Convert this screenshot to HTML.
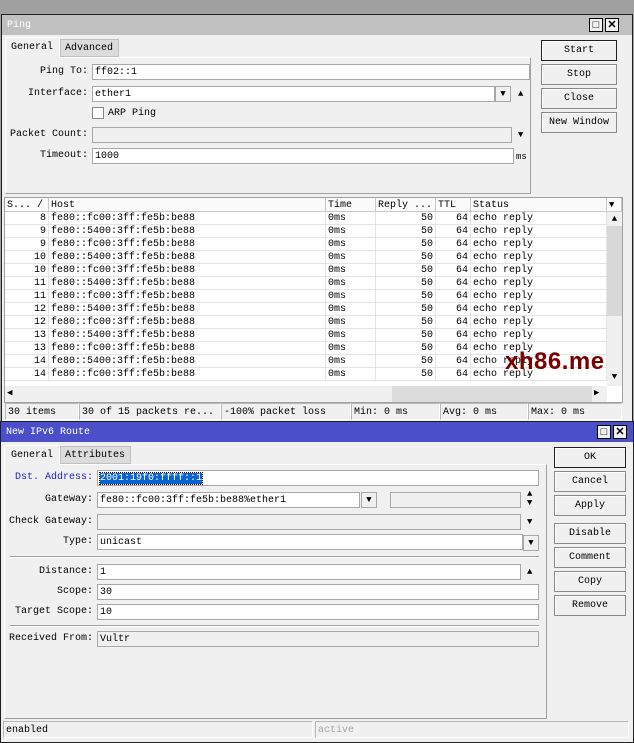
<!DOCTYPE html>
<html><head><meta charset="utf-8"><style>
*{box-sizing:border-box;margin:0;padding:0}
body{width:634px;height:743px;background:#a0a0a0;position:relative;overflow:hidden;font-family:"Liberation Mono","DejaVu Sans Mono",monospace;font-size:10px;color:#000}
.a{position:absolute}
.win{background:#f0f0f0;border:1px solid #202020}
.in{position:absolute;background:#fff;border:1px solid #a8a8a8;height:16px;line-height:15px;padding-left:2px;white-space:nowrap;overflow:hidden}
.gr{background:#f0f0f0}
.lb{position:absolute;text-align:right;line-height:16px;white-space:nowrap}
.btn{position:absolute;border:1px solid #8a8a8a;background:#f0f0f0;text-align:center;line-height:20px;box-shadow:inset 1px 1px #fff}
.tb{position:absolute;width:14px;height:14px;border:1px solid #000;background:#f0f0f0;font-size:11px;line-height:12px;text-align:center;font-family:"Liberation Sans",sans-serif;font-weight:bold}
.dd{position:absolute;width:16px;height:16px;border:1px solid #a8a8a8;background:#f0f0f0;text-align:center;font-size:9px;line-height:14px}
.tri{position:absolute;font-size:9px;line-height:10px}
.rows{position:absolute;left:5px;top:212px;width:602px;background:#fff}
.r{height:13px;border-bottom:1px solid #e4e4e4;position:relative;white-space:nowrap;line-height:13px}
.r span{position:absolute;top:0;height:12px;border-right:1px solid #e4e4e4;padding:0 2px;overflow:hidden}
.hd{position:absolute;top:198px;height:14px;line-height:15px;border-right:1px solid #c8c8c8;border-bottom:1px solid #c8c8c8;padding-left:2px;background:#fafafa}
.sb{position:absolute;top:403px;height:17px;line-height:17px;border:1px solid #b8b8b8;border-right-color:#fff;border-bottom-color:#fff;padding-left:2px;white-space:nowrap;overflow:hidden}
</style></head><body>

<div class="a win" style="left:1px;top:14px;width:632px;height:408px"></div>
<div class="a" style="left:2px;top:15px;width:630px;height:20px;background:#c0c0c0"></div>
<div class="a" style="left:7px;top:19px;color:#fff;line-height:14px">Ping</div>
<div class="tb" style="left:589px;top:18px">□</div>
<div class="tb" style="left:605px;top:18px">✕</div>

<div class="a" style="left:5px;top:57px;width:526px;height:137px;border:1px solid #a0a0a0;border-top-color:#fff;border-left-color:#fff"></div>
<div class="a" style="left:5px;top:37px;width:55px;height:21px;background:#f0f0f0;border:1px solid #fff;border-bottom:none;line-height:20px;padding-left:5px">General</div>
<div class="a" style="left:60px;top:39px;width:59px;height:18px;background:#dcdcdc;border:1px solid #c0c0c0;line-height:18px;padding-left:4px">Advanced</div>

<div class="lb" style="right:546px;top:64px">Ping To:</div>
<div class="in" style="left:92px;top:64px;width:438px">ff02::1</div>
<div class="lb" style="right:546px;top:86px">Interface:</div>
<div class="in" style="left:92px;top:86px;width:403px">ether1</div>
<div class="dd" style="left:495px;top:86px">▼</div>
<div class="tri" style="left:518px;top:89px">▲</div>
<div class="a" style="left:92px;top:107px;width:12px;height:12px;background:#fff;border:1px solid #888"></div>
<div class="a" style="left:108px;top:106px;line-height:16px">ARP Ping</div>
<div class="lb" style="right:546px;top:127px">Packet Count:</div>
<div class="in gr" style="left:92px;top:127px;width:420px"></div>
<div class="tri" style="left:518px;top:130px">▼</div>
<div class="lb" style="right:546px;top:148px">Timeout:</div>
<div class="in" style="left:92px;top:148px;width:422px">1000</div>
<div class="a" style="left:516px;top:150px;line-height:14px;font-size:9px">ms</div>

<div class="btn" style="left:541px;top:40px;width:76px;height:21px;border-color:#202020">Start</div>
<div class="btn" style="left:541px;top:64px;width:76px;height:21px">Stop</div>
<div class="btn" style="left:541px;top:88px;width:76px;height:21px">Close</div>
<div class="btn" style="left:541px;top:112px;width:76px;height:21px">New Window</div>

<div class="a" style="left:4px;top:197px;width:619px;height:206px;background:#fff;border:1px solid #a0a0a0"></div>
<div class="hd" style="left:5px;width:44px">S... /</div>
<div class="hd" style="left:49px;width:277px">Host</div>
<div class="hd" style="left:326px;width:50px">Time</div>
<div class="hd" style="left:376px;width:60px">Reply ...</div>
<div class="hd" style="left:436px;width:35px">TTL</div>
<div class="hd" style="left:471px;width:136px">Status</div>
<div class="hd" style="left:607px;width:15px;font-size:9px">▼</div>
<div class="rows" id="rows"></div>
<script>
var d=[[8,'fc00'],[9,'5400'],[9,'fc00'],[10,'5400'],[10,'fc00'],[11,'5400'],[11,'fc00'],[12,'5400'],[12,'fc00'],[13,'5400'],[13,'fc00'],[14,'5400'],[14,'fc00']],h='';
d.forEach(function(x){h+='<div class="r"><span style="left:0;width:44px;text-align:right">'+x[0]+'</span><span style="left:44px;width:277px">fe80::'+x[1]+':3ff:fe5b:be88</span><span style="left:321px;width:50px">0ms</span><span style="left:371px;width:60px;text-align:right">50</span><span style="left:431px;width:35px;text-align:right">64</span><span style="left:466px;width:136px">echo reply</span></div>';});
document.getElementById('rows').innerHTML=h;
</script>
<div class="a" style="left:607px;top:212px;width:15px;height:174px;background:#f0f0f0"></div>
<div class="a" style="left:607px;top:226px;width:15px;height:90px;background:#d8d8d8"></div>
<div class="a" style="left:607px;top:214px;width:15px;text-align:center;font-size:9px">▲</div>
<div class="a" style="left:607px;top:372px;width:15px;text-align:center;font-size:9px">▼</div>
<div class="a" style="left:5px;top:386px;width:602px;height:16px;background:#f0f0f0"></div>
<div class="a" style="left:392px;top:386px;width:200px;height:16px;background:#dcdcdc"></div>
<div class="a" style="left:7px;top:388px;font-size:9px">◀</div>
<div class="a" style="left:594px;top:388px;font-size:9px">▶</div>
<div class="a" style="left:505px;top:349px;color:#7a0000;font-family:'Liberation Sans',sans-serif;font-weight:bold;font-size:24px;line-height:26px;letter-spacing:0.5px">xh86.me</div>

<div class="sb" style="left:5px;width:74px">30 items</div>
<div class="sb" style="left:79px;width:142px">30 of 15 packets re...</div>
<div class="sb" style="left:221px;width:130px">-100% packet loss</div>
<div class="sb" style="left:351px;width:89px">Min: 0 ms</div>
<div class="sb" style="left:440px;width:88px">Avg: 0 ms</div>
<div class="sb" style="left:528px;width:94px">Max: 0 ms</div>

<div class="a win" style="left:0;top:421px;width:634px;height:322px"></div>
<div class="a" style="left:1px;top:422px;width:632px;height:20px;background:#4b4fca"></div>
<div class="a" style="left:6px;top:426px;color:#fff;line-height:14px">New IPv6 Route</div>
<div class="tb" style="left:597px;top:425px">□</div>
<div class="tb" style="left:613px;top:425px">✕</div>

<div class="a" style="left:4px;top:464px;width:543px;height:255px;border:1px solid #a0a0a0;border-top-color:#fff;border-left-color:#fff"></div>
<div class="a" style="left:4px;top:445px;width:56px;height:20px;background:#f0f0f0;border:1px solid #fff;border-bottom:none;line-height:19px;padding-left:6px">General</div>
<div class="a" style="left:60px;top:446px;width:71px;height:18px;background:#dcdcdc;border:1px solid #c0c0c0;line-height:18px;padding-left:4px">Attributes</div>

<div class="lb" style="right:541px;top:470px;color:#2020d0">Dst. Address:</div>
<div class="in" style="left:97px;top:470px;width:442px"><span style="background:#0a64d0;color:#fff;outline:1px dotted #000">2001:19f0:ffff::1</span></div>
<div class="lb" style="right:541px;top:492px">Gateway:</div>
<div class="in" style="left:97px;top:492px;width:263px">fe80::fc00:3ff:fe5b:be88%ether1</div>
<div class="dd" style="left:361px;top:492px">▼</div>
<div class="in gr" style="left:390px;top:492px;width:131px"></div>
<div class="tri" style="left:527px;top:490px;line-height:9px">▲<br>▼</div>
<div class="lb" style="right:541px;top:514px">Check Gateway:</div>
<div class="in gr" style="left:97px;top:514px;width:424px"></div>
<div class="tri" style="left:527px;top:517px">▼</div>
<div class="lb" style="right:541px;top:534px">Type:</div>
<div class="in" style="left:97px;top:534px;width:426px">unicast</div>
<div class="dd" style="left:523px;top:535px">▼</div>
<div class="a" style="left:10px;top:556px;width:529px;height:2px;border-top:1px solid #a0a0a0;border-bottom:1px solid #fff"></div>
<div class="lb" style="right:541px;top:564px">Distance:</div>
<div class="in" style="left:97px;top:564px;width:424px">1</div>
<div class="tri" style="left:527px;top:567px">▲</div>
<div class="lb" style="right:541px;top:584px">Scope:</div>
<div class="in" style="left:97px;top:584px;width:442px">30</div>
<div class="lb" style="right:541px;top:604px">Target Scope:</div>
<div class="in" style="left:97px;top:604px;width:442px">10</div>
<div class="a" style="left:10px;top:625px;width:529px;height:2px;border-top:1px solid #a0a0a0;border-bottom:1px solid #fff"></div>
<div class="lb" style="right:541px;top:631px">Received From:</div>
<div class="in gr" style="left:97px;top:631px;width:442px">Vultr</div>

<div class="btn" style="left:554px;top:447px;width:72px;height:21px;border-color:#202020">OK</div>
<div class="btn" style="left:554px;top:471px;width:72px;height:21px">Cancel</div>
<div class="btn" style="left:554px;top:495px;width:72px;height:21px">Apply</div>
<div class="btn" style="left:554px;top:523px;width:72px;height:21px">Disable</div>
<div class="btn" style="left:554px;top:547px;width:72px;height:21px">Comment</div>
<div class="btn" style="left:554px;top:571px;width:72px;height:21px">Copy</div>
<div class="btn" style="left:554px;top:595px;width:72px;height:21px">Remove</div>

<div class="sb" style="left:3px;top:721px;width:310px">enabled</div>
<div class="sb" style="left:315px;top:721px;width:314px;color:#a8a8a8">active</div>
</body></html>
